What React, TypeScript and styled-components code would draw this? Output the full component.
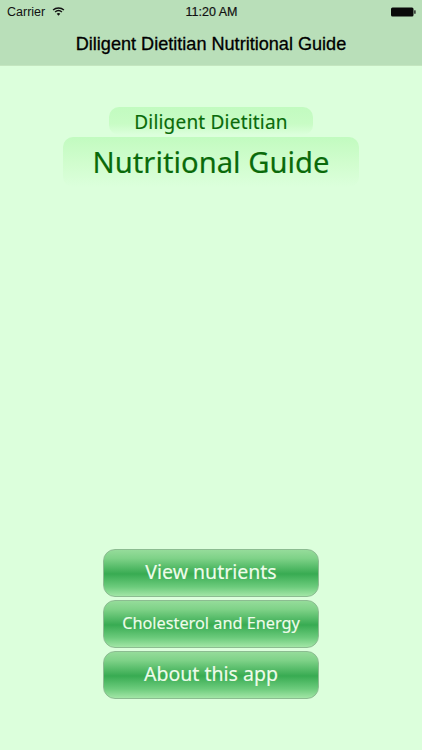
import React from "react";
import styled, { createGlobalStyle } from "styled-components";

const Global = createGlobalStyle`
  html, body { margin: 0; padding: 0; height: 100%; background: #dcffdc; }
  #root { height: 100%; }
  * { box-sizing: border-box; }
`;

const Page = styled.div`
  width: 422px;
  height: 750px;
  display: flex;
  flex-direction: column;
  align-items: center;
  background: #dcffdc;
  overflow: hidden;
`;

const Header = styled.header`
  width: 100%;
  height: 66px;
  flex: none;
  background: #b9dfb9;
  border-bottom: 1px solid #c4e6c0;
  font-family: "Liberation Sans", Arial, sans-serif;
  color: #000;
`;

const StatusBar = styled.div`
  height: 23px;
  padding: 0 6px 0 7px;
  display: grid;
  grid-template-columns: 1fr auto 1fr;
  align-items: center;
  font-size: 12.5px;
  color: #111;
`;

const StatusLeft = styled.div`
  display: flex;
  align-items: center;
  gap: 7px;
`;

const StatusTime = styled.div`
  -webkit-text-stroke: 0.2px #111;
`;

const StatusRight = styled.div`
  display: flex;
  justify-content: flex-end;
`;

const NavTitle = styled.div`
  height: 42px;
  display: flex;
  align-items: center;
  justify-content: center;
  font-size: 18.1px;
  -webkit-text-stroke: 0.3px #000;
`;

const TitleBlock = styled.section`
  margin-top: 41px;
  display: flex;
  flex-direction: column;
  align-items: center;
  gap: 2px;
  font-family: "Noto Sans", sans-serif;
  color: #0a6a0a;
  -webkit-text-stroke: 0.15px #0a6a0a;
`;

const TitleChip = styled.div<{ $big?: boolean }>`
  display: flex;
  align-items: center;
  justify-content: center;
  width: ${(p) => (p.$big ? 296 : 204)}px;
  height: ${(p) => (p.$big ? 50 : 28)}px;
  padding-top: ${(p) => (p.$big ? 0 : 1)}px;
  border-radius: 10px;
  font-size: ${(p) => (p.$big ? 29.2 : 19)}px;
  letter-spacing: ${(p) => (p.$big ? 0 : 0.2)}px;
  white-space: nowrap;
  background: linear-gradient(
    to bottom,
    #c2fbc0 0%,
    ${(p) => (p.$big ? "#d0fdcd 50%" : "#c8fcc5 60%")},
    #dcffdc 100%
  );
`;

const Actions = styled.nav`
  margin-top: auto;
  margin-bottom: 51px;
  display: flex;
  flex-direction: column;
  gap: 3px;
`;

const ActionButton = styled.button<{ $small?: boolean }>`
  width: 216px;
  height: 48px;
  padding: 0 0 3px;
  border-radius: 12px;
  border: 1px solid #8cbc91;
  background: linear-gradient(
    to bottom,
    #95dc9a 0%,
    #7fd288 18%,
    #38ab52 52%,
    #6ccb7c 80%,
    #a2e6a6 100%
  );
  color: #eefcea;
  -webkit-text-stroke: 0.15px #eefcea;
  font-family: "Noto Sans", sans-serif;
  font-size: ${(p) => (p.$small ? 16.3 : 19.5)}px;
  white-space: nowrap;
`;

const Wifi = () => (
  <svg width="13" height="9" viewBox="0 0 14 10" fill="none" stroke="#111">
    <path d="M1 3.4C4.4 .4 9.6 .4 13 3.4" strokeWidth="1.6" />
    <path d="M3.2 5.5C5.4 3.7 8.6 3.7 10.8 5.5" strokeWidth="1.6" />
    <path d="M7 9.6 5 7.4C6.2 6.5 7.8 6.5 9 7.4Z" fill="#111" stroke="none" />
  </svg>
);

const Battery = () => (
  <svg width="25" height="10" viewBox="0 0 25 10">
    <rect x="0" y="0.5" width="22.5" height="9" rx="1.5" fill="#0a0a0a" />
    <rect x="23.2" y="3.2" width="1.4" height="3.6" rx="0.5" fill="#222" />
  </svg>
);

export default function App() {
  return (
    <Page>
      <Global />
      <Header>
        <StatusBar>
          <StatusLeft>
            <span>Carrier</span>
            <Wifi />
          </StatusLeft>
          <StatusTime>11:20 AM</StatusTime>
          <StatusRight>
            <Battery />
          </StatusRight>
        </StatusBar>
        <NavTitle>Diligent Dietitian Nutritional Guide</NavTitle>
      </Header>
      <TitleBlock>
        <TitleChip>Diligent Dietitian</TitleChip>
        <TitleChip $big>Nutritional Guide</TitleChip>
      </TitleBlock>
      <Actions>
        <ActionButton>View nutrients</ActionButton>
        <ActionButton $small>Cholesterol and Energy</ActionButton>
        <ActionButton>About this app</ActionButton>
      </Actions>
    </Page>
  );
}
